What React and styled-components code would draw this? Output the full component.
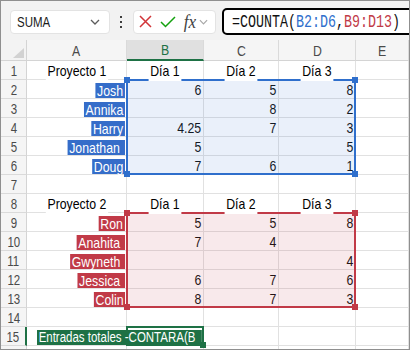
import React from 'react';
import styled, { createGlobalStyle } from 'styled-components';

const SANS = `"Liberation Sans", Arial, sans-serif`;
const MONO = `"Liberation Mono", "DejaVu Sans Mono", monospace`;

const BLUE = '#356dc9';
const RED = '#c13a47';
const GREEN = '#1e7145';

/* the screenshot's text is horizontally condensed; no narrow face is installed */
const SQUEEZE = 0.82;

const GlobalStyle = createGlobalStyle`
  html, body { margin: 0; padding: 0; background: #fff; }
  body { font-family: ${SANS}; }
`;

const Frame = styled.div`
  width: 410px;
  height: 350px;
  box-sizing: border-box;
  border: 1px solid #8f8f8f;
  display: flex;
  flex-direction: column;
  overflow: hidden;
  background: #fff;
`;

const Squeeze = styled.span`
  display: inline-block;
  transform: scaleX(${(p) => p.$scale || SQUEEZE});
  transform-origin: ${(p) => p.$origin || 'center'};
`;

/* ---------- formula toolbar ---------- */

const Toolbar = styled.div`
  height: 39px;
  flex: none;
  display: flex;
  align-items: center;
  padding: 2px 0 0 9px;
  box-sizing: border-box;
  background: #f2f2f2;
`;

const NameBox = styled.div`
  width: 100px;
  height: 24px;
  box-sizing: border-box;
  flex: none;
  display: flex;
  align-items: center;
  justify-content: space-between;
  padding: 0 9px 0 6px;
  background: #fff;
  border: 1px solid #e3e3e3;
  border-radius: 4px;
  font-size: 14px;
  color: #1b1b1b;
`;

const Dots = styled.div`
  margin-left: 10px;
  display: flex;
  flex-direction: column;
  gap: 3px;

  span {
    width: 2px;
    height: 2px;
    background: #3d3d3d;
  }
`;

const ButtonGroup = styled.div`
  margin-left: 11px;
  width: 83px;
  height: 24px;
  box-sizing: border-box;
  flex: none;
  display: flex;
  align-items: center;
  padding-left: 4px;
  background: #fff;
  border: 1px solid #e3e3e3;
  border-radius: 4px;

  svg + svg {
    margin-left: 7px;
  }
`;

const Fx = styled.span`
  font-family: "Liberation Serif", "DejaVu Serif", serif;
  font-style: italic;
  font-size: 19px;
  color: #424242;
  margin: 0 2px 0 7px;
  display: inline-block;
  transform: scaleX(0.9);
`;

const FormulaBox = styled.div`
  margin-left: 6px;
  width: 240px;
  height: 27px;
  box-sizing: border-box;
  flex: none;
  display: flex;
  align-items: center;
  padding-left: 8px;
  border: 2px solid #000;
  border-radius: 5px;
  background: #fff;
  font-family: ${MONO};
  font-size: 18px;
  color: #111;
  white-space: nowrap;
`;

const Ref = styled.span`
  color: ${(p) => p.$color};
`;

/* ---------- sheet grid ---------- */

const Sheet = styled.div`
  position: relative;
  flex: 1;
  display: grid;
  grid-template-columns: 26px 100px 77px 75px 77px 1fr;
  grid-template-rows: 21px repeat(16, 19px);
  font-size: 15px;
  color: #111;
`;

const Corner = styled.div`
  background: #f3f3f3;
  border-right: 1px solid #d4d4d4;
  border-bottom: 1px solid #d4d4d4;
  display: flex;
  align-items: flex-end;
  justify-content: flex-end;
  padding: 0 2px 2px 0;
`;

const ColHead = styled.div`
  display: flex;
  align-items: center;
  justify-content: center;
  font-size: 15px;
  color: ${(p) => (p.$active ? GREEN : '#4a4a4a')};
  background: ${(p) => (p.$active ? '#e0e0e0' : '#f5f5f5')};
  border-right: 1px solid #dadada;
  border-bottom: ${(p) => (p.$active ? `2px solid ${GREEN}` : '1px solid #d4d4d4')};
`;

const RowHead = styled.div`
  display: flex;
  align-items: center;
  justify-content: center;
  font-size: 14px;
  padding-top: 1px;
  color: #4a4a4a;
  background: #f5f5f5;
  border-bottom: 1px solid #dadada;
  border-right: ${(p) => (p.$active ? `2px solid ${GREEN}` : '1px solid #d4d4d4')};
`;

const Cell = styled.div`
  display: flex;
  align-items: flex-end;
  justify-content: ${(p) => p.$justify || 'flex-end'};
  padding: 0 ${(p) => (p.$justify === 'center' ? 0 : 2)}px 1px 0;
  border-right: 1px solid #e1e1e1;
  border-bottom: 1px solid #e1e1e1;
  white-space: nowrap;
  min-width: 0;
  line-height: 15px;
`;

const Label = styled(Squeeze)`
  position: relative;
  z-index: 2;
  background: #fff;
  padding: 0 2px 3px;
  margin-bottom: -3px;
  color: #000;
`;

const Name = styled(Squeeze)`
  background: ${(p) => p.$color};
  color: #fff;
  padding: 0 2px;
  margin: 0 -1px -1px 0;
  white-space: pre;
`;

const Typing = styled(Squeeze)`
  margin: 0 0 -1px 10px;
  min-width: 201px;
  box-sizing: border-box;
  padding: 0 2px;
  font-size: 14px;
  background: ${GREEN};
  color: #fff;
  position: relative;
  z-index: 2;
`;

const Range = styled.div`
  position: absolute;
  grid-row: ${(p) => p.$rows};
  grid-column: ${(p) => p.$cols};
  top: -1px;
  left: -1px;
  right: 0;
  bottom: 0;
  border: 2px solid ${(p) => p.$color};
  background: ${(p) => p.$fill};
  z-index: 1;
  pointer-events: none;
`;

const Handle = styled.div`
  position: absolute;
  width: 6px;
  height: 6px;
  background: ${(p) => p.$color};
  ${(p) => (p.$v === 'top' ? 'top: -4px;' : 'bottom: -4px;')}
  ${(p) => (p.$h === 'left' ? 'left: -4px;' : 'right: -4px;')}
`;

const cols = ['A', 'B', 'C', 'D', 'E'];

const rows = [
  { label: true, a: 'Proyecto 1', b: 'Día 1', c: 'Día 2', d: 'Día 3' },
  { name: 'Josh', color: BLUE, b: '6', c: '5', d: '8' },
  { name: 'Annika', color: BLUE, b: '', c: '8', d: '2' },
  { name: 'Harry', color: BLUE, b: '4.25', c: '7', d: '3' },
  { name: 'Jonathan ', color: BLUE, b: '5', c: '', d: '5' },
  { name: 'Doug', color: BLUE, b: '7', c: '6', d: '1' },
  {},
  { label: true, a: 'Proyecto 2', b: 'Día 1', c: 'Día 2', d: 'Día 3' },
  { name: 'Ron', color: RED, b: '5', c: '5', d: '8' },
  { name: 'Anahita ', color: RED, b: '7', c: '4', d: '' },
  { name: 'Gwyneth ', color: RED, b: '', c: '', d: '4' },
  { name: 'Jessica ', color: RED, b: '6', c: '7', d: '6' },
  { name: 'Colin', color: RED, b: '8', c: '7', d: '3' },
  {},
  { typing: 'Entradas totales -CONTARA(B' },
  {},
];

function Chevron({ color = '#5c5c5c', w = 10 }) {
  return (
    <svg width={w} height="6" viewBox="0 0 10 6">
      <polyline points="1,1 5,5 9,1" fill="none" stroke={color} strokeWidth="1.3" />
    </svg>
  );
}

function Row({ r, n }) {
  if (r.typing) {
    return (
      <>
        <RowHead $active>
          <Squeeze>{n}</Squeeze>
        </RowHead>
        <Cell $justify="flex-start">
          <Typing $origin="left">{r.typing}</Typing>
        </Cell>
        <Cell />
        <Cell />
        <Cell />
        <Cell />
      </>
    );
  }
  const justify = r.label ? 'center' : 'flex-end';
  return (
    <>
      <RowHead>{n < 16 && <Squeeze>{n}</Squeeze>}</RowHead>
      <Cell $justify={justify}>
        {r.label && <Label>{r.a}</Label>}
        {r.name && (
          <Name $color={r.color} $origin="right">
            {r.name}
          </Name>
        )}
      </Cell>
      {['b', 'c', 'd'].map((k) => (
        <Cell key={k} $justify={justify}>
          {r.label ? <Label>{r[k]}</Label> : r[k] && <Squeeze $origin="right">{r[k]}</Squeeze>}
        </Cell>
      ))}
      <Cell />
    </>
  );
}

export default function App() {
  return (
    <>
      <GlobalStyle />
      <Frame>
        <Toolbar>
          <NameBox>
            <Squeeze $origin="left">SUMA</Squeeze>
            <Chevron />
          </NameBox>
          <Dots>
            <span />
            <span />
            <span />
          </Dots>
          <ButtonGroup>
            <svg width="15" height="15" viewBox="0 0 15 15">
              <path d="M2 2 L13 13 M13 2 L2 13" stroke="#d13438" strokeWidth="1.5" fill="none" />
            </svg>
            <svg width="16" height="12" viewBox="0 0 16 12">
              <polyline points="1,6 5.5,10.5 15,1" stroke="#13a10e" strokeWidth="1.5" fill="none" />
            </svg>
            <Fx>fx</Fx>
            <Chevron color="#a8a8a8" w={9} />
          </ButtonGroup>
          <FormulaBox>
            <Squeeze $origin="left" $scale={0.74}>
              =COUNTA(<Ref $color="#2f6fcc">B2:D6</Ref>,<Ref $color={RED}>B9:D13</Ref>)
            </Squeeze>
          </FormulaBox>
        </Toolbar>
        <Sheet>
          <Corner>
            <svg width="11" height="10" viewBox="0 0 11 10">
              <polygon points="11,0 11,10 0,10" fill="#d2d2d2" />
            </svg>
          </Corner>
          {cols.map((c) => (
            <ColHead key={c} $active={c === 'B'}>
              <Squeeze>{c}</Squeeze>
            </ColHead>
          ))}
          {rows.map((r, i) => (
            <Row key={i} r={r} n={i + 1} />
          ))}

          <Range $rows="3 / 8" $cols="3 / 6" $color="#2f6fcc" $fill="rgba(47,111,204,0.1)">
            <Handle $color="#2f6fcc" $v="top" $h="left" />
            <Handle $color="#2f6fcc" $v="top" $h="right" />
            <Handle $color="#2f6fcc" $v="bottom" $h="left" />
            <Handle $color="#2f6fcc" $v="bottom" $h="right" />
          </Range>
          <Range $rows="10 / 15" $cols="3 / 6" $color={RED} $fill="rgba(193,58,71,0.11)">
            <Handle $color={RED} $v="top" $h="left" />
            <Handle $color={RED} $v="top" $h="right" />
            <Handle $color={RED} $v="bottom" $h="left" />
            <Handle $color={RED} $v="bottom" $h="right" />
          </Range>
          <Range $rows="16 / 17" $cols="3 / 4" $color={GREEN} $fill="transparent">
            <Handle $color={GREEN} $v="bottom" $h="right" />
          </Range>
        </Sheet>
      </Frame>
    </>
  );
}
